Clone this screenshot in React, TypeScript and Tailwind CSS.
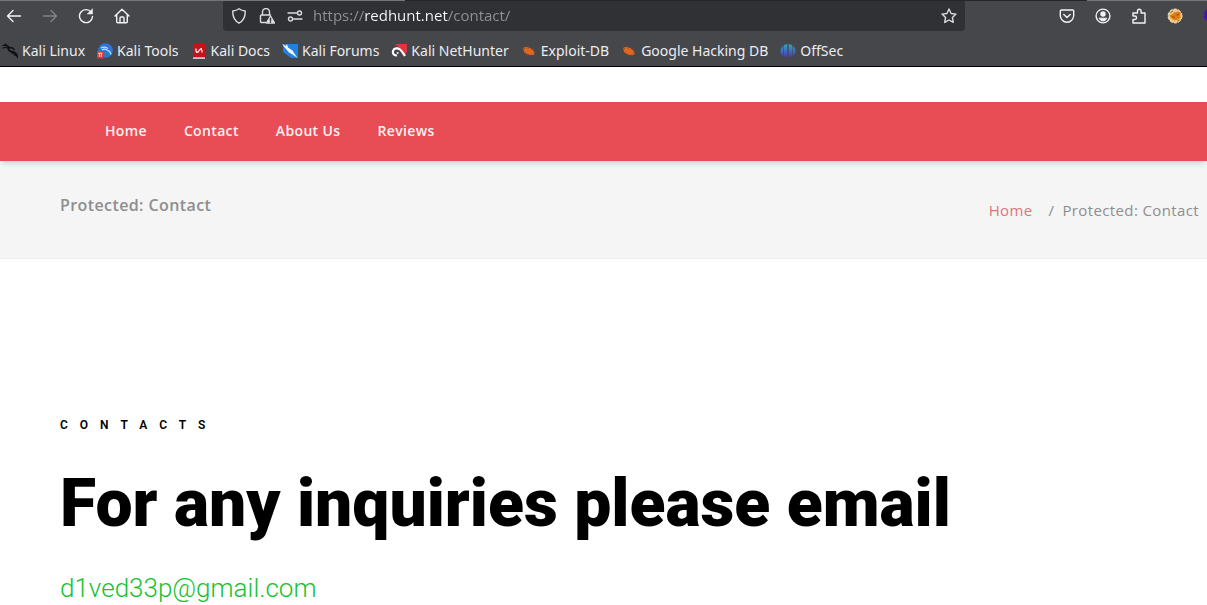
const bookmarks = [
	{ name: "Kali Linux", icon: <KaliIcon /> },
	{ name: "Kali Tools", icon: <ToolsIcon /> },
	{ name: "Kali Docs", icon: <DocsIcon /> },
	{ name: "Kali Forums", icon: <ForumsIcon /> },
	{ name: "Kali NetHunter", icon: <NetHunterIcon /> },
	{ name: "Exploit-DB", icon: <BugIcon /> },
	{ name: "Google Hacking DB", icon: <BugIcon /> },
	{ name: "OffSec", icon: <OffSecIcon /> },
];

const navLinks = ["Home", "Contact", "About Us", "Reviews"];

function KaliIcon() {
	return (
		<svg viewBox="0 0 16 16" className="w-4 h-4" fill="none" stroke="#101114" strokeLinecap="round">
			<path d="M1 2.500C3 2 5.500 3 7.500 4.800M3 1l4 3M.8 5C3 4 5 4.500 7 5.500" strokeWidth="1.200" />
			<path d="M6.500 5C6 7.500 8 8.500 11 9c2.500.5 3.500 1.500 4.500 5" strokeWidth="1.900" />
			<path d="M7 4.500 10.500 5 12 6.500M9.500 9.500c2 .3 3 1.500 4 3" strokeWidth="1.400" />
		</svg>
	);
}

function ToolsIcon() {
	return (
		<svg viewBox="0 0 16 16" className="w-4 h-4">
			<circle cx="8.500" cy="7.500" r="7.300" fill="#2f74d8" />
			<path
				d="M4 5C6.500 3.500 9 4 11 5.500M5 7c2-1.200 3.500-1 5 0 2.500.8 3.500 2 4 4.500"
				stroke="#cfe0fa"
				strokeWidth="1.200"
				fill="none"
			/>
			<path d="M0 8h6.500v7.500H0z" fill="#d8343c" />
			<path d="M1.200 10.200h4.200M2.300 10v4M4.300 10v4" stroke="#f7d5d5" fill="none" />
		</svg>
	);
}

function DocsIcon() {
	return (
		<svg viewBox="0 0 16 16" className="w-4 h-4">
			<path d="M3 0h11v14H2V1.500z" fill="#c8121b" />
			<path d="M2 14.300h12v1.500H2z" fill="#f0dcdc" />
			<path
				d="M5 5.500v2.300c0 1.800 2.800 1.800 3 0s2.800-1.800 3 0v1.700M5 9.500h1.500M9.500 5.500H11"
				stroke="#fff"
				strokeWidth="1.200"
				fill="none"
			/>
		</svg>
	);
}

function ForumsIcon() {
	return (
		<svg viewBox="0 0 16 16" className="w-4 h-4">
			<path d="M1 1h15v14H9L1 9z" fill="#2280e0" />
			<path d="m0 1 4 2 1-2 1 3.500 4.500 3L12 10l3.500 5-5-3.500L7 9.500 4 6Z" fill="#f4f8fc" />
		</svg>
	);
}

function NetHunterIcon() {
	return (
		<svg viewBox="0 0 16 16" className="w-4 h-4">
			<path d="M4 1h12v8l-3 4L8 5z" fill="#df3540" />
			<path
				d="M6 12.500C3 12.500 1.300 10.500 2 8 3 5 6.500 4.500 9 6.500c2 1.700 3 3.500 5 6.500"
				stroke="#fff"
				strokeWidth="2.200"
				fill="none"
			/>
			<path d="m5.500 9 2.500.5-1.500 2z" fill="#fff" />
		</svg>
	);
}

function BugIcon() {
	return (
		<svg viewBox="0 0 16 16" className="w-4 h-4">
			<path d="M2 5c2-1.700 5.500-1.300 8 .5l3 3c.7 1.500.5 3-.5 3.500-3.500.3-7.500-.3-9.500-3.500z" fill="#e0661f" />
			<path
				d="M2 4.500 4 6M7 3v3M11 6.500l2-.5M4 9.500 2.500 10M7.500 11l-1 2M11 11.500l.5 2M12.500 10h2"
				stroke="#8f4a24"
				strokeWidth=".9"
			/>
		</svg>
	);
}

function OffSecIcon() {
	return (
		<svg viewBox="0 0 16 16" className="w-4 h-4">
			<defs>
				<linearGradient id="offsec" x1="0" y1="0" x2="0" y2="16" gradientUnits="userSpaceOnUse">
					<stop offset="0.100" stopColor="#2fa3bd" />
					<stop offset="0.900" stopColor="#4b38c0" />
				</linearGradient>
			</defs>
			<path
				d="M7.300 1v13.500C5 14 3.800 13 3.800 11V2.500C4.700 1.500 6 1.100 7.300 1ZM8.700 1v13.500c2.300-.5 3.500-1.500 3.500-3.500V2.500C11.300 1.500 10 1.100 8.700 1ZM3.200 3v10C-.5 11 -.5 5.500 3.200 3ZM12.800 3v10c3.700-2 3.700-7.500 0-10Z"
				fill="url(#offsec)"
			/>
		</svg>
	);
}

const Glyph = ({ children }: { children: React.ReactNode }) => (
	<svg
		viewBox="0 0 16 16"
		className="w-4 h-4 shrink-0"
		fill="none"
		stroke="currentColor"
		strokeWidth="1.400"
		strokeLinecap="round"
		strokeLinejoin="round"
	>
		{children}
	</svg>
);

const Toolbar = () => (
	<div className="flex items-center h-[31px]">
		<div className="flex items-center gap-5 w-[223px] pl-1.5 text-[#f3f3f6]">
			<button aria-label="Back">
				<Glyph>
					<path d="M14.500 8H1.500M7 2.500 1.500 8 7 13.500" />
				</Glyph>
			</button>
			<button aria-label="Forward" disabled className="text-[#828387]">
				<Glyph>
					<path d="M1.500 8h13M9 2.500 14.500 8 9 13.500" />
				</Glyph>
			</button>
			<button aria-label="Reload">
				<Glyph>
					<path d="M13.200 4.200A6.500 6.500 0 1 0 14.500 8.500" />
					<path d="M14.500 1v5H9.500z" fill="currentColor" strokeWidth=".5" />
				</Glyph>
			</button>
			<button aria-label="Home page">
				<Glyph>
					<path d="M1 8 8 1.200 15 8M2.700 6.500v7.300a1 1 0 0 0 1 1h8.600a1 1 0 0 0 1-1V6.500M6 14.500V10a1 1 0 0 1 1-1h2a1 1 0 0 1 1 1v4.500" />
				</Glyph>
			</button>
		</div>
		<div className="flex flex-1 items-center h-full px-2 rounded-b-sm bg-[#303135] text-[#dcdce0]">
			<div className="flex items-center gap-3 mr-2.5">
				<Glyph>
					<path d="M8 .8c2 1.500 4 2 6.200 2.200C14.500 9 12 13 8 15.200 4 13 1.500 9 1.800 3 4 2.800 6 2.300 8 .8Z" />
				</Glyph>
				<Glyph>
					<path d="M3.500 7V4a3.500 3.500 0 0 1 7 0v3M7 14.500H2.500a1 1 0 0 1-1-1V8a1 1 0 0 1 1-1h9" />
					<path d="m11.500 8 4 7h-8z" fill="currentColor" />
					<path d="M11.500 10.300v2.200M11.500 14v.2" stroke="#303135" />
				</Glyph>
				<Glyph>
					<path d="M1 5h8.500M6.500 11H15" />
					<circle cx="12.500" cy="5" r="2" />
					<circle cx="3.500" cy="11" r="2" />
				</Glyph>
			</div>
			<input
				type="text"
				aria-label="Address"
				defaultValue="https://redhunt.net/contact/"
				className="flex-1 min-w-0 pb-0.5 outline-none font-['Open_Sans',sans-serif] text-[15px] leading-5 text-transparent bg-clip-text bg-[linear-gradient(90deg,#919297_51px,#fbfbfe_51px,#fbfbfe_135px,#919297_135px)]"
			/>
			<button aria-label="Bookmark this page">
				<Glyph>
					<path d="m8 1 2.100 4.500 4.900.6-3.600 3.400.9 4.900L8 12l-4.300 2.400.9-4.900L1 6.100l4.900-.6z" />
				</Glyph>
			</button>
		</div>
		<div className="flex items-center gap-5 w-[242px] justify-end overflow-hidden text-[#f3f3f6]">
			<button aria-label="Save to Pocket">
				<Glyph>
					<path d="M2.500 2h11a1.200 1.200 0 0 1 1.200 1.200V7.500a6.700 6.700 0 0 1-13.400 0V3.200A1.200 1.200 0 0 1 2.500 2ZM4.800 6.500 8 9.500l3.200-3" />
				</Glyph>
			</button>
			<button aria-label="Account">
				<Glyph>
					<circle cx="8" cy="8" r="6.900" />
					<circle cx="8" cy="6" r="2" fill="currentColor" />
					<path d="M4.300 10.200h7.400C11 12.200 9.600 13 8 13s-3-.8-3.700-2.800Z" fill="currentColor" strokeWidth=".8" />
				</Glyph>
			</button>
			<button aria-label="Extensions">
				<Glyph>
					<path d="M2 15V11.500h1.800a1.700 1.700 0 0 0 0-3.500H2V5h4.500V3a1.800 1.800 0 0 1 3.600 0v2H14v10Z" />
				</Glyph>
			</button>
			<button aria-label="FoxyProxy">
				<svg viewBox="0 0 16 16" className="w-4 h-4">
					<circle cx="8" cy="8" r="7" fill="#f0c987" stroke="#efe0bd" strokeWidth="1" strokeDasharray="3 1.500" />
					<path d="M2.500 7 5 6.500 7 4.500l4.500-1L14 5l-1 3 1 1-2.500 2.500-4 1L4 10z" fill="#dc7d12" />
					<path d="M9.500 7.500 12 6M5 8.500l2.500 1" stroke="#a34d08" strokeWidth="1.200" />
					<path d="M3.500 4.500 6 3M10.500 13l2-1" stroke="#8f5a1c" strokeWidth="1" />
				</svg>
			</button>
			<button aria-label="Wappalyzer" className="w-1 overflow-hidden">
				<svg viewBox="0 0 4 16" className="w-1 h-4">
					<path d="M4 1.500 1 4l1 3-2 2 4 3.500z" fill="#4b0fb5" />
				</svg>
			</button>
		</div>
	</div>
);

const BrowserChrome = () => (
	<header className="relative h-[67px] bg-[#46474b] border-b border-black font-['Noto_Sans',sans-serif] overflow-hidden">
		<Toolbar />
		<ul className="flex items-center gap-3 h-[35px] pt-1 pl-0.5 text-[#ececf0]">
			{bookmarks.map((b) => (
				<li key={b.name}>
					<a href="#" className="flex items-center gap-1 text-sm whitespace-nowrap">
						{b.icon}
						{b.name}
					</a>
				</li>
			))}
		</ul>
		{/* bottom edge of the tab strip */}
		<div className="absolute top-0 left-0 right-0 flex h-0.5">
			<div className="w-[405px] h-px bg-[#747579]" />
			<div className="flex-1 h-px bg-[#25262a]" />
			<div className="w-[120px] h-px bg-[#747579]" />
		</div>
	</header>
);

const App = () => {
	return (
		<div className="bg-white font-['Open_Sans',sans-serif]">
			<BrowserChrome />
			<nav className="relative mt-[35px] flex items-center gap-[37px] h-[59px] pb-0.5 pl-[105px] bg-[#e84c54] shadow-md">
				{navLinks.map((link) => (
					<a key={link} href="#" className="text-sm font-semibold tracking-wide text-[#fdf1f1]">
						{link}
					</a>
				))}
			</nav>
			<div className="flex justify-between h-[98px] pt-8 pl-[60px] pr-2 bg-[#f5f5f5] border-b border-[#f0f0f0] text-[#8e8e8e]">
				<h1 className="text-base font-semibold tracking-wide">Protected: Contact</h1>
				<div className="flex mt-1.5 text-[15px] leading-[22px] tracking-wide">
					<a href="#" className="text-[#e2727c]">
						Home
					</a>
					<span className="ml-4 mr-2">/</span>
					<span>Protected: Contact</span>
				</div>
			</div>
			<main className="pt-[158px] px-[60px] font-[Roboto,sans-serif] text-black">
				<p className="text-xs font-semibold tracking-[12px]">CONTACTS</p>
				<h2 className="mt-8 text-[66px] leading-[78px] font-black">For any inquiries please email</h2>
				<a href="#" className="block mt-7 text-[26px] leading-[34px] font-light text-[#16c22f]">
					d1ved33p@gmail.com
				</a>
			</main>
		</div>
	);
};

export default App;
